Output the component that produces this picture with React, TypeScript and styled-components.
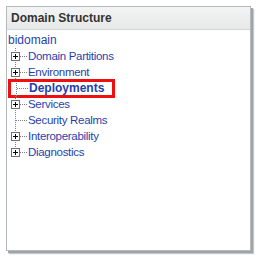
import React from 'react';
import styled, { createGlobalStyle } from 'styled-components';

const GlobalStyle = createGlobalStyle`
  html, body {
    margin: 0;
    padding: 0;
    background: #fff;
  }
  body {
    font-family: "Liberation Sans", Arial, sans-serif;
  }
`;

type Node = {
  label: string;
  expandable: boolean;
  selected?: boolean;
};

const nodes: Node[] = [
  { label: 'Domain Partitions', expandable: true },
  { label: 'Environment', expandable: true },
  { label: 'Deployments', expandable: false, selected: true },
  { label: 'Services', expandable: true },
  { label: 'Security Realms', expandable: false },
  { label: 'Interoperability', expandable: true },
  { label: 'Diagnostics', expandable: true },
];

const Page = styled.div`
  padding: 6px;
`;

const Panel = styled.div`
  width: 243px;
  height: 243px;
  border: 1px solid #b4b9bd;
  background: #fff;
  box-shadow: 2px 2px 0 #9fa4a7, 3px 3px 1px #c4c8ca;
  display: flex;
  flex-direction: column;
`;

const Header = styled.div`
  height: 22px;
  display: flex;
  align-items: center;
  padding-left: 4px;
  background: linear-gradient(#f4f4f4, #e7e8e8);
  border-bottom: 1px solid #d2d5d7;
  font-weight: bold;
  font-size: 12px;
  color: #333;
`;

const Tree = styled.div`
  padding: 2px 0 0 1px;
  display: flex;
  flex-direction: column;
`;

const RootLabel = styled.div`
  height: 16px;
  line-height: 16px;
  font-size: 12px;
  color: #1f3fae;
`;

const Row = styled.div`
  height: 16px;
  display: flex;
  align-items: center;
`;

const Label = styled.span<{ $selected?: boolean }>`
  font-size: ${p => (p.$selected ? '12px' : '11.5px')};
  letter-spacing: ${p => (p.$selected ? '0' : '-0.3px')};
  color: #1f3fae;
  font-weight: ${p => (p.$selected ? 'bold' : 'normal')};
  line-height: 16px;
  white-space: nowrap;
`;

const Highlight = styled.div`
  display: flex;
  align-items: center;
  height: 13px;
  width: 101px;
  border: 3px solid #f00f0f;
`;

const Connector = ({ expandable, last }: { expandable: boolean; last: boolean }) => (
  <svg width="20" height="16" viewBox="0 0 20 16" style={{ flex: 'none' }}>
    <line x1="7.5" y1="0" x2="7.5" y2={last ? 8 : 16} stroke="#808080" strokeDasharray="1 1" />
    <line x1={expandable ? 12 : 8} y1="8.5" x2="20" y2="8.5" stroke="#808080" strokeDasharray="1 1" />
    {expandable && (
      <>
        <rect x="3.5" y="4.5" width="8" height="8" fill="#fff" stroke="#6f6f6f" />
        <line x1="5" y1="8.5" x2="10" y2="8.5" stroke="#000" />
        <line x1="7.5" y1="6" x2="7.5" y2="11" stroke="#000" />
      </>
    )}
  </svg>
);

const SelectedConnector = () => (
  <svg width="18" height="19" viewBox="0 0 18 19" style={{ flex: 'none' }}>
    <line x1="5.5" y1="4" x2="5.5" y2="19" stroke="#808080" strokeDasharray="1 1" />
    <line x1="6" y1="9.5" x2="18" y2="9.5" stroke="#808080" strokeDasharray="1 1" />
  </svg>
);

export default function App() {
  return (
    <Page>
      <GlobalStyle />
      <Panel>
        <Header>Domain Structure</Header>
        <Tree>
          <RootLabel>bidomain</RootLabel>
          {nodes.map((n, i) =>
            n.selected ? (
              <Row key={n.label}>
                <Highlight>
                  <SelectedConnector />
                  <Label $selected>{n.label}</Label>
                </Highlight>
              </Row>
            ) : (
              <Row key={n.label}>
                <Connector expandable={n.expandable} last={i === nodes.length - 1} />
                <Label>{n.label}</Label>
              </Row>
            )
          )}
        </Tree>
      </Panel>
    </Page>
  );
}
